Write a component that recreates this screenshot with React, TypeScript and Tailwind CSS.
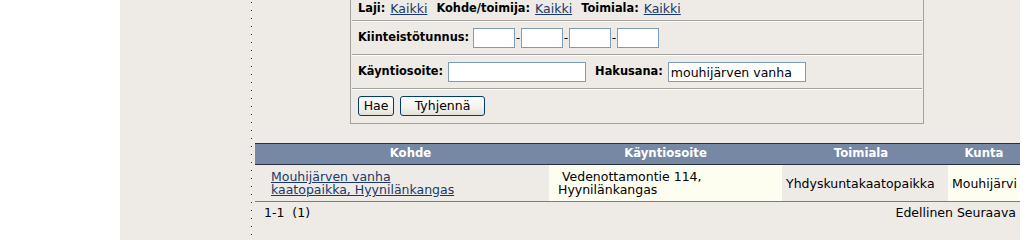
import React from "react";

// Search form + result list, old-style portal page

const fieldCls = "h-[20px] border border-[#7f9db9] bg-white px-[2px] text-[12.5px] leading-[18px] outline-none";
const btnCls =
  "h-[20px] rounded-[3px] border border-[#003c74] bg-[linear-gradient(to_bottom,#ffffff,#f3f2ee_60%,#e3e0d6)] text-[12.5px] leading-[18px] text-black";

function FormRow({ children, className = "" }: { children: React.ReactNode; className?: string }) {
  return (
    <div className={`flex border-t border-t-white border-b border-b-[#a4a29c] pl-[6px] ${className}`}>{children}</div>
  );
}

function Link({ children }: { children: React.ReactNode }) {
  return <a className="cursor-pointer text-[#1a386c] underline underline-offset-[1px]">{children}</a>;
}

export default function App() {
  const [haku, setHaku] = React.useState("mouhijärven vanha");

  return (
    <div className="flex h-[240px] w-[1029px] overflow-hidden bg-white font-['DejaVu_Sans',Verdana,sans-serif] text-[12.5px] text-black">
      <div className="w-[120px] shrink-0" />
      <div className="flex w-[900px] shrink-0 bg-[#eeebe6]">
        <div className="w-[131px] shrink-0" />
        <div className="w-px shrink-0 bg-[repeating-linear-gradient(to_bottom,transparent_0_2px,#4a2418_2px_3px,transparent_3px_8px)]" />
        <div className="flex flex-1 flex-col pl-[3px]">
          {/* search form */}
          <div className="-mt-[14px] ml-[95px] w-[574px] border-x border-b border-[#a4a29c] px-px pb-px">
            <FormRow className="h-[35px] items-end pb-[4px] leading-[15px]">
              <b className="text-[11.4px]">Laji:</b>
              <span className="ml-[5px]">
                <Link>Kaikki</Link>
              </span>
              <b className="ml-[9px] text-[11.4px]">Kohde/toimija:</b>
              <span className="ml-[5px]">
                <Link>Kaikki</Link>
              </span>
              <b className="ml-[9px] text-[11.4px]">Toimiala:</b>
              <span className="ml-[5px]">
                <Link>Kaikki</Link>
              </span>
            </FormRow>
            <FormRow className="h-[34px] items-center">
              <b className="text-[11.4px]">Kiinteistötunnus:</b>
              <div className="ml-[4px] flex items-center">
                <input className={`${fieldCls} w-[42px]`} />
                <span className="w-[6px] text-center">-</span>
                <input className={`${fieldCls} w-[42px]`} />
                <span className="w-[6px] text-center">-</span>
                <input className={`${fieldCls} w-[42px]`} />
                <span className="w-[6px] text-center">-</span>
                <input className={`${fieldCls} w-[42px]`} />
              </div>
            </FormRow>
            <FormRow className="h-[34px] items-center">
              <b className="text-[11.4px]">Käyntiosoite:</b>
              <input className={`${fieldCls} ml-[5px] w-[138px]`} />
              <b className="ml-[9px] text-[11.4px]">Hakusana:</b>
              <input
                className={`${fieldCls} ml-[5px] w-[138px]`}
                value={haku}
                onChange={(e) => setHaku(e.target.value)}
              />
            </FormRow>
            <FormRow className="h-[33px] items-center gap-[6px] border-b-0">
              <button className={`${btnCls} w-[36px]`}>Hae</button>
              <button className={`${btnCls} w-[85px]`}>Tyhjennä</button>
            </FormRow>
          </div>

          {/* results */}
          <table className="mt-[19px] w-[765px] table-fixed border-collapse">
            <colgroup>
              <col className="w-[294px]" />
              <col className="w-[233px]" />
              <col className="w-[166px]" />
              <col className="w-[72px]" />
            </colgroup>
            <thead>
              <tr className="h-[21px] border-y border-[#26303f] bg-[#7788a4] text-[11.7px] font-bold text-white">
                <th className="pl-[17px] text-center">Kohde</th>
                <th className="text-center">Käyntiosoite</th>
                <th className="pr-[8px] text-center">Toimiala</th>
                <th className="text-center">Kunta</th>
              </tr>
            </thead>
            <tbody>
              <tr className="h-[37px] border-b border-[#7d7b77] leading-[13px]">
                <td className="pl-[16px] align-middle">
                  <Link>
                    Mouhijärven vanha
                    <br />
                    kaatopaikka, Hyynilänkangas
                  </Link>
                </td>
                <td className="bg-[#fefef0] pl-[9px] align-middle">
                  &nbsp;Vedenottamontie 114,
                  <br />
                  Hyynilänkangas
                </td>
                <td className="pl-[4px] align-middle">Yhdyskuntakaatopaikka</td>
                <td className="bg-[#fefef0] pl-[4px] align-middle">Mouhijärvi</td>
              </tr>
            </tbody>
          </table>
          <div className="flex w-[765px] justify-between pt-[3px] pl-[9px] pr-[4px] leading-[15px]">
            <span>1-1&nbsp;&nbsp;(1)</span>
            <span>Edellinen Seuraava</span>
          </div>
        </div>
      </div>
    </div>
  );
}
